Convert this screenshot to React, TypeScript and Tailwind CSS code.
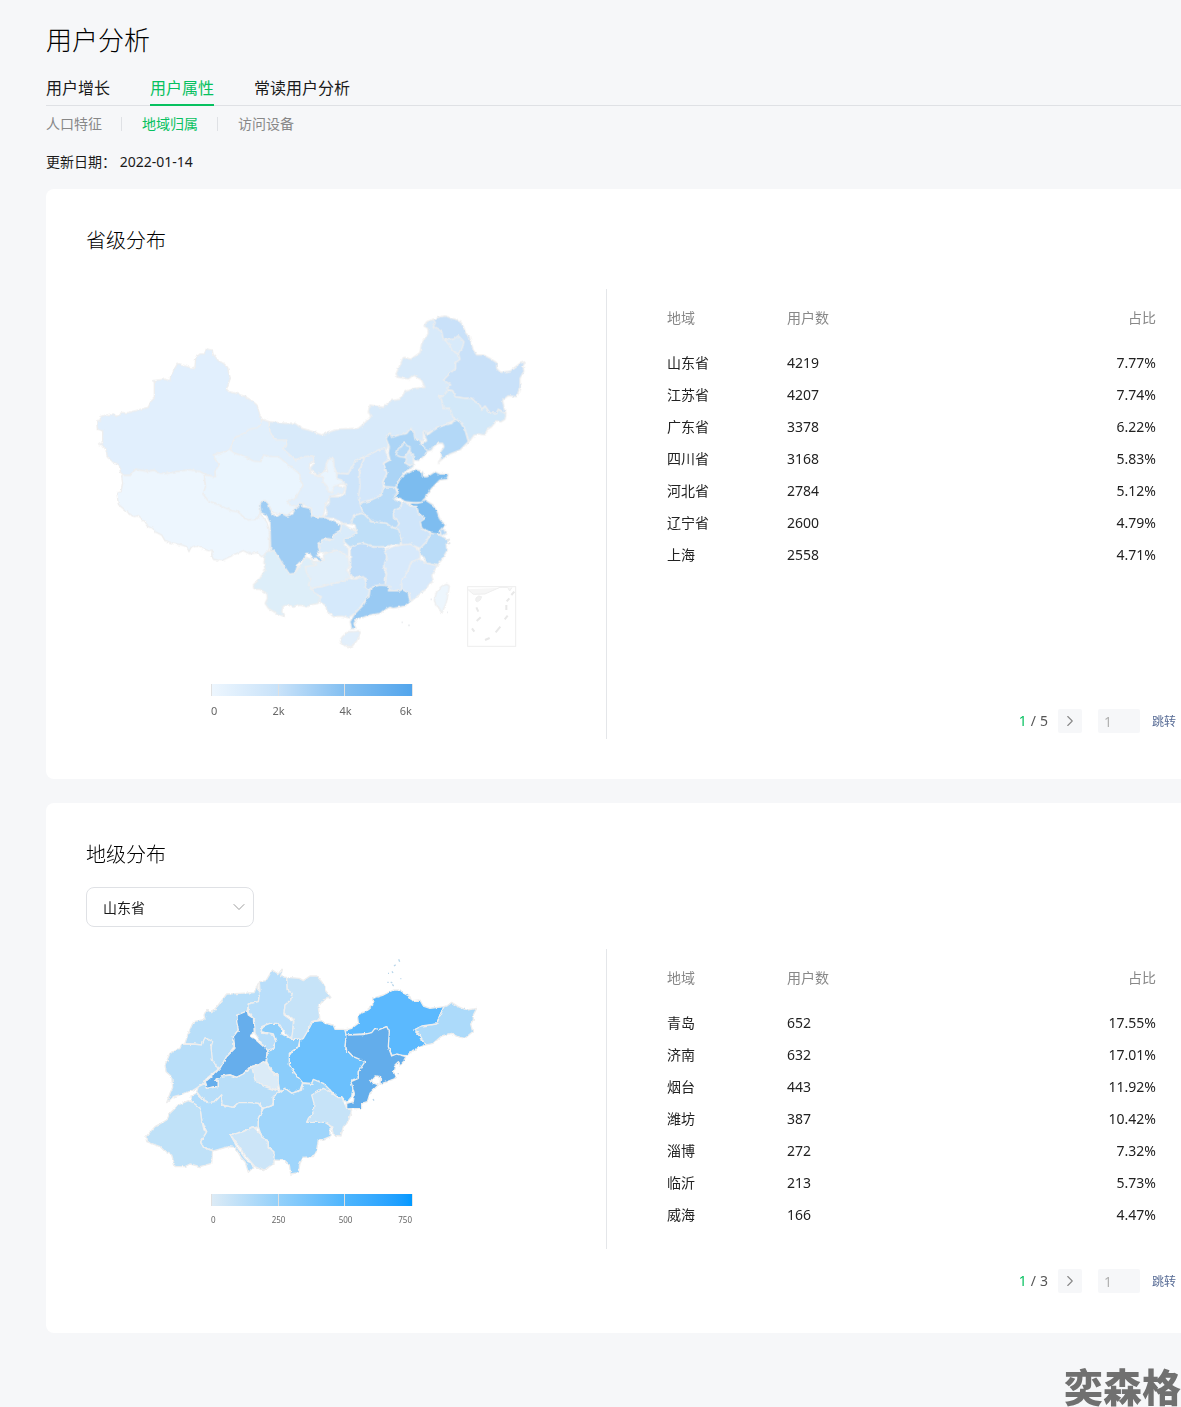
import { ChevronDown, ChevronRight } from "lucide-react";

type Region = { name: string; fill: string; points: string };
type RegionGroup = { x: number; y: number; regions: Region[] };
type Row = { area: string; users: number; share: string };

const provinceRows: Row[] = [
  { area: "山东省", users: 4219, share: "7.77%" },
  { area: "江苏省", users: 4207, share: "7.74%" },
  { area: "广东省", users: 3378, share: "6.22%" },
  { area: "四川省", users: 3168, share: "5.83%" },
  { area: "河北省", users: 2784, share: "5.12%" },
  { area: "辽宁省", users: 2600, share: "4.79%" },
  { area: "上海", users: 2558, share: "4.71%" },
];

const cityRows: Row[] = [
  { area: "青岛", users: 652, share: "17.55%" },
  { area: "济南", users: 632, share: "17.01%" },
  { area: "烟台", users: 443, share: "11.92%" },
  { area: "潍坊", users: 387, share: "10.42%" },
  { area: "淄博", users: 272, share: "7.32%" },
  { area: "临沂", users: 213, share: "5.73%" },
  { area: "威海", users: 166, share: "4.47%" },
];

// Later regions are painted over earlier ones, so shared borders only need to be exact once
const chinaGroups: RegionGroup[] = [
  {
    x: 612,
    y: 0,
    regions: [
      { name: "内蒙古", fill: "#d8eafa", points: "-63,365 -15,370 15,370 35,385 60,392 95,405 120,395 150,387 205,385 225,368 243,350 235,335 240,315 280,322 300,303 330,298 345,275 375,265 405,262 395,240 370,225 355,237 325,232 318,222 340,172 362,178 390,158 395,130 415,100 413,85 402,78 410,65 430,58 530,100 530,160 510,185 497,220 500,280 495,360 410,400 400,395 400,425 380,420 365,400 300,415 290,450 270,450 225,470 200,480 180,522 140,520 130,500 130,478 115,480 105,510 85,530 60,505 72,490 68,468 20,478 5,480 -22,465 -45,425 -63,400" },
      { name: "黑龙江", fill: "#c9e1f9", points: "430,58 445,52 465,48 490,56 510,62 520,80 528,100 538,110 550,150 560,165 580,165 600,175 620,188 620,205 632,217 660,213 690,190 706,185 698,200 702,213 690,235 690,262 680,290 655,287 638,300 642,325 648,340 625,328 620,338 600,340 585,318 575,328 568,312 555,305 545,295 525,295 495,290 488,272 470,268 482,254 460,240 480,220 497,205 497,188 510,178 505,160 515,150 522,125 505,107 490,118 460,118 455,95 440,85 430,80 436,68" },
      { name: "吉林", fill: "#d2e8f9", points: "447,285 458,290 470,272 488,272 495,290 525,295 545,295 555,305 568,312 575,328 585,318 600,340 620,338 625,328 648,342 645,358 632,366 620,362 605,380 590,390 585,405 565,402 550,408 538,425 525,390 510,365 495,358 488,350 480,325 460,325 455,300" },
      { name: "辽宁", fill: "#b3d8f7", points: "400,395 407,392 412,405 432,390 455,378 485,370 495,358 510,365 525,390 535,425 510,450 480,462 460,475 445,487 455,470 452,455 462,440 458,430 445,430 430,440 425,450 410,455 395,432 410,422" },
      { name: "河北", fill: "#abd4f6", points: "288,415 300,398 305,412 330,404 350,400 362,385 372,395 375,418 390,420 395,435 412,452 405,465 388,482 370,480 370,500 345,515 325,545 318,565 285,562 278,545 290,520 280,490 300,480 295,460 298,440" },
      { name: "北京", fill: "#b5d9f7", points: "318,465 325,445 334,440 343,428 352,438 360,440 360,458 350,465 345,472 330,470" },
      { name: "天津", fill: "#d5e9fa", points: "345,470 358,450 362,462 370,462 370,490 360,498 345,488 350,478" },
    ],
  },
  {
    x: -3,
    y: 90,
    regions: [
      { name: "甘肃", fill: "#e1effc", points: "531,268 552,275 555,305 570,330 605,330 605,345 593,355 620,380 632,390 655,380 683,378 687,390 670,405 680,430 700,440 765,440 760,470 783,470 775,490 735,500 720,530 715,562 680,560 680,535 645,520 625,540 600,540 600,450 430,420 434,361 450,322 493,298 526,285" },
      { name: "新疆", fill: "#e1effd", points: "364,57 382,60 384,72 400,92 415,100 428,112 430,122 436,145 424,178 432,185 452,190 476,197 500,212 516,225 523,250 531,268 526,285 515,294 493,298 470,315 450,322 440,345 430,366 385,375 392,390 402,405 390,425 392,440 360,433 345,425 315,419 270,426 240,431 220,428 208,421 185,424 152,418 136,436 116,436 106,426 103,405 85,397 66,380 65,362 52,345 40,342 53,335 53,303 37,297 35,273 47,270 45,260 70,254 86,252 94,260 110,248 130,248 160,240 190,232 197,215 208,205 208,155 203,152 240,148 255,152 257,137 278,100 300,108 318,114 330,112 332,82 345,72 358,72" },
      { name: "西藏", fill: "#edf6fe", points: "116,436 136,436 152,418 185,424 208,421 220,428 240,431 270,426 315,419 345,425 360,433 358,450 362,470 354,492 370,512 410,528 460,546 480,565 510,568 525,550 545,575 553,600 553,655 545,672 530,680 515,668 495,672 475,662 445,675 425,685 410,692 385,688 380,675 382,660 370,662 335,648 318,652 312,665 305,650 290,645 265,640 240,632 230,615 210,605 208,598 190,590 180,575 160,557 145,560 120,540 100,523 96,490 108,485 113,460 110,440" },
      { name: "青海", fill: "#eaf5fe", points: "385,375 412,367 437,360 450,370 475,378 505,393 528,395 535,375 560,380 580,380 605,400 630,420 645,432 645,450 655,465 640,492 628,508 605,512 615,524 640,530 625,540 608,555 590,555 565,548 550,525 540,512 528,518 525,548 520,560 510,568 490,570 480,565 460,546 440,542 410,528 370,512 354,492 362,470 358,435 392,440 390,425 402,405 392,390" },
    ],
  },
  {
    x: 462,
    y: 510,
    regions: [
      { name: "陕西", fill: "#cde4fa", points: "290,10 325,12 330,0 350,-30 375,-40 358,0 364,50 355,80 360,100 370,130 340,135 345,165 310,160 280,145 250,142 262,128 255,110 268,98 268,80 300,80 315,70 318,48 305,35 290,25" },
      { name: "山西", fill: "#d3e7fb", points: "375,-40 395,-50 420,-62 435,-65 445,-30 430,-20 440,10 428,35 430,50 425,75 390,90 360,98 355,80 360,50 358,10 365,-15" },
      { name: "宁夏", fill: "#eaf5fe", points: "235,15 250,5 262,5 258,-18 268,-36 280,-35 282,-10 290,10 290,25 305,30 317,44 300,42 280,50 278,68 265,65 262,50 248,35 250,20" },
      { name: "云南", fill: "#ddeef9", points: "75,250 92,240 100,238 115,262 130,285 148,312 165,310 180,285 200,262 230,275 210,320 220,350 225,365 245,385 235,400 210,405 200,410 180,405 160,412 145,405 130,408 125,425 133,440 110,430 85,415 75,400 82,385 80,370 60,358 42,358 40,345 60,325 75,300 72,280" },
      { name: "四川", fill: "#9fcdf4", points: "60,105 65,94 75,92 85,100 95,130 110,140 125,130 140,138 158,132 165,115 175,112 178,100 188,100 188,110 212,115 215,140 250,142 268,148 305,165 300,185 280,195 280,208 260,206 245,210 235,225 240,245 230,255 252,270 235,274 228,264 215,265 210,250 198,250 195,265 175,280 165,310 148,312 140,300 130,285 115,262 100,240 92,245 90,160 78,135 62,128" },
      { name: "山东", fill: "#7cbcef", points: "525,-3 548,5 550,20 562,20 585,5 600,12 625,12 622,28 600,30 575,55 555,85 550,97 520,98 495,95 480,85 460,80 475,65 468,50 478,30 490,15 510,5" },
      { name: "河南", fill: "#b9dbf8", points: "430,50 465,52 472,68 460,85 485,100 480,115 462,120 460,140 478,155 475,175 455,172 440,160 395,155 370,130 360,100 390,92 425,75" },
      { name: "江苏", fill: "#7ebdf0", points: "507,98 530,100 545,97 552,87 580,105 592,125 600,148 617,165 605,175 608,180 600,192 580,193 562,182 545,178 540,155 555,145 535,130 530,110 515,108" },
      { name: "上海", fill: "#b5d8f7", points: "600,180 610,176 620,192 603,197" },
      { name: "安徽", fill: "#cfe5fa", points: "485,100 495,95 510,108 530,110 535,130 555,145 540,155 545,175 570,190 560,215 540,235 510,222 485,225 480,195 465,180 478,160 460,140 462,120 480,115" },
      { name: "浙江", fill: "#badcf8", points: "570,190 590,192 605,198 628,210 618,222 622,240 605,270 590,287 560,280 550,262 535,245 540,235 560,215" },
      { name: "福建", fill: "#d7e9fb", points: "535,265 560,280 592,287 575,315 580,335 570,340 555,360 530,380 512,395 508,370 480,360 485,330 505,300 512,278" },
      { name: "江西", fill: "#d7e9fb", points: "435,240 460,230 485,225 510,222 525,230 540,245 540,265 512,278 505,300 485,330 485,362 445,362 435,345 440,310 430,285 440,262" },
      { name: "湖北", fill: "#bfdff8", points: "340,140 350,134 370,130 395,155 440,160 455,172 475,178 485,205 480,225 460,222 440,232 425,232 400,230 380,222 360,220 330,232 312,215 312,208 330,200 350,190 345,165 334,160" },
      { name: "重庆", fill: "#d9ebfa", points: "305,158 325,172 345,180 350,190 330,203 312,208 312,225 325,235 325,262 310,250 290,240 270,245 240,250 235,225 245,210 280,208 280,195 300,185" },
      { name: "贵州", fill: "#e1effa", points: "195,290 230,285 215,275 235,274 252,270 250,255 270,245 290,240 310,250 325,262 328,290 320,300 335,320 310,335 280,340 245,350 215,355 205,345 212,325 200,310" },
      { name: "湖南", fill: "#c0ddf9", points: "330,232 360,220 380,222 400,232 430,230 440,262 430,290 438,310 435,345 415,345 400,350 385,360 375,350 378,325 355,320 340,325 328,305 332,280" },
      { name: "广西", fill: "#d5e9fb", points: "212,355 245,350 280,340 310,335 325,325 345,328 370,320 378,335 375,350 388,360 385,380 370,400 345,430 325,443 305,438 280,440 262,425 255,405 235,395 245,380 225,370" },
      { name: "广东", fill: "#99caf3", points: "390,358 400,350 420,345 450,348 445,362 480,362 485,358 505,368 510,395 495,408 460,415 450,412 430,422 420,430 390,435 370,442 350,448 342,460 348,475 335,477 330,455 345,430 370,405 378,390 388,375" },
      { name: "海南", fill: "#e2effb", points: "301,508 310,497 325,485 348,484 360,482 360,492 350,512 335,530 315,528 303,518" },
      { name: "台湾", fill: "#edf6fd", points: "620,343 628,348 624,372 618,400 605,430 598,415 588,408 583,390 590,365 605,348" },
    ],
  },
];

const shandongGroups: RegionGroup[] = [
  {
    x: 0,
    y: 0,
    regions: [
      { name: "德州", fill: "#b8def9", points: "385,100 383,118 390,125 385,155 355,162 352,183 320,195 325,240 310,260 312,290 290,320 270,355 255,350 245,330 243,285 225,265 215,285 165,280 175,250 190,215 225,208 222,195 230,178 245,188 265,165 290,132 330,130 372,128" },
      { name: "聊城", fill: "#b8def9", points: "155,283 190,282 215,285 225,263 248,275 243,290 247,330 265,358 230,385 215,405 190,420 150,435 130,440 110,458 120,430 128,412 125,380 108,365 105,345 120,310 150,295" },
      { name: "滨州", fill: "#b9defa", points: "388,95 408,92 427,60 445,72 458,55 452,80 470,82 472,120 487,130 482,150 465,165 462,195 490,215 487,262 480,265 465,250 450,225 420,220 395,230 395,250 430,252 438,275 425,300 412,305 375,250 373,210 355,185 355,162 385,155 390,125" },
      { name: "济南", fill: "#66aeec", points: "322,195 352,183 355,195 370,205 373,245 360,258 378,270 395,285 412,300 408,335 385,345 360,350 340,372 320,382 300,375 275,378 258,388 265,395 265,410 250,410 232,415 226,395 250,375 270,355 290,320 315,295 310,260 325,240 320,215" },
      { name: "东营", fill: "#c6e3f8", points: "470,82 508,85 520,92 540,78 560,78 575,95 585,110 585,120 603,142 580,150 565,170 570,208 545,215 530,250 518,270 485,265 492,215 488,205 462,190 465,165 482,150 487,130 472,120" },
      { name: "潍坊", fill: "#6bc0fd", points: "548,215 575,212 585,220 610,225 615,238 645,238 650,255 645,295 670,320 705,332 700,350 685,365 685,385 665,390 670,410 665,440 650,458 635,440 620,440 600,420 580,415 575,400 555,400 550,390 545,400 515,398 495,370 478,345 475,320 490,300 508,290 508,272 520,265 535,240" },
      { name: "淄博", fill: "#8bcdfb", points: "393,245 400,228 420,220 440,220 455,235 455,252 485,268 510,268 505,290 478,310 478,345 495,370 518,398 510,420 485,430 465,415 450,425 440,375 425,362 410,335 412,305 425,300 438,275 430,252 412,248" },
      { name: "莱芜", fill: "#dbebf7", points: "365,350 385,345 400,335 415,345 420,360 445,380 443,420 420,415 400,408 375,390" },
      { name: "泰安", fill: "#b8def9", points: "226,400 232,415 265,410 265,395 258,388 275,378 300,375 320,382 340,372 365,350 375,390 400,408 450,425 430,440 430,465 400,475 385,460 360,458 325,458 310,472 275,465 275,435 255,455 235,458 215,445 200,425 205,410" },
      { name: "济宁", fill: "#b1dcfb", points: "180,440 200,430 215,445 235,458 255,455 275,435 275,465 310,472 325,458 360,458 385,460 398,478 385,505 385,530 302,555 320,590 345,625 372,650 355,667 345,635 335,625 315,592 295,590 250,603 220,592 212,575 230,545 215,510 210,475 185,455" },
      { name: "菏泽", fill: "#bfe1f8", points: "175,452 190,458 210,475 215,510 222,540 230,545 212,575 220,592 248,603 245,640 210,650 180,642 165,650 135,650 125,615 110,608 90,590 50,575 48,560 75,530 110,510 120,490 145,465" },
      { name: "枣庄", fill: "#cce5f8", points: "302,555 340,545 370,530 385,545 395,560 415,575 415,590 432,605 432,640 400,662 375,650 345,615 320,580" },
      { name: "临沂", fill: "#9fd5fb", points: "445,430 465,415 485,430 515,420 518,400 545,402 550,388 580,400 600,420 600,560 580,568 565,570 560,600 550,620 520,622 510,640 505,668 482,672 478,645 465,632 432,630 432,605 415,590 415,575 395,560 385,530 385,505 400,475 430,465 430,440" },
      { name: "日照", fill: "#c6e3f8", points: "545,435 580,415 600,425 620,440 635,440 650,475 665,480 655,515 640,530 633,558 610,555 605,530 585,517 530,517 535,505 550,485 552,460" },
      { name: "烟台", fill: "#5bb9fe", points: "645,240 665,235 685,220 682,195 705,185 728,165 728,145 760,135 790,120 810,120 825,132 840,140 845,152 870,150 880,168 900,175 942,170 930,195 920,222 875,230 852,240 870,260 885,285 850,300 830,317 785,315 775,290 775,250 770,230 720,250 648,255" },
      { name: "青岛", fill: "#63adeb", points: "648,255 700,254 725,248 735,235 745,240 770,230 778,245 775,290 785,318 800,312 828,320 820,335 812,345 805,335 795,345 790,365 797,385 750,403 752,380 735,378 720,395 745,405 720,430 712,455 695,460 695,475 650,477 650,460 670,455 673,430 663,395 685,385 685,365 705,335 670,320 645,295" },
      { name: "威海", fill: "#acdafa", points: "942,170 955,165 965,157 985,170 1010,180 1040,175 1030,195 1030,210 1022,222 1028,245 1005,265 990,262 965,250 935,258 910,280 885,285 870,255 852,240 875,228 920,222 930,195" },
    ],
  },
];

function RegionShapes({ groups }: { groups: RegionGroup[] }) {
  return (
    <>
      {groups.map((group) => (
        <g key={`${group.x}-${group.y}`} transform={`translate(${group.x} ${group.y})`}>
          {group.regions.map((r) => (
            <polygon key={r.name} points={r.points} fill={r.fill} stroke="#eee" strokeWidth="4" strokeLinejoin="round">
              <title>{r.name}</title>
            </polygon>
          ))}
        </g>
      ))}
    </>
  );
}

// Roughens straight polygon edges into something closer to a coastline
function RoughEdges({ id }: { id: string }) {
  return (
    <filter id={id} x="-2%" y="-2%" width="104%" height="104%" colorInterpolationFilters="sRGB">
      <feTurbulence type="fractalNoise" baseFrequency="0.08" numOctaves="2" seed="4" />
      <feDisplacementMap in="SourceGraphic" scale="9" xChannelSelector="R" yChannelSelector="G" />
    </filter>
  );
}

function ChinaMap() {
  return (
    <svg viewBox="0 0 1320 1080" className="w-[440px] h-[360px]" role="img" aria-label="省级分布">
      <defs>
        <RoughEdges id="rough-china" />
      </defs>
      <g filter="url(#rough-china)">
        <RegionShapes groups={chinaGroups} />
        <path d="M1075 118 L1090 135 L1098 152 L1119 164" fill="none" stroke="#eee" strokeWidth="4" />
      </g>
      {/* 南海诸岛 */}
      <g transform="translate(462 510)" stroke="#eee" fill="none" strokeWidth="3">
        <rect x="683" y="350" width="144" height="179" />
        <path d="M683 358 L700 373 L735 372 L780 352 L803 352 L809 363 L816 352" fill="#f6f6f6" />
        <path d="M708 384 l8 -6 l9 2 l-4 10 l-10 6 l-4 -5 z" fill="#f1f1f1" />
        <path d="M823 365 l-9 10 M808 385 l-8 9 M799 405 v15 M803 437 l-9 11 M781 470 l-14 17 M749 504 l-14 6 M703 485 l-7 -10 M722 442 l-12 11 M709 412 l6 13" stroke="#e8e8e8" strokeWidth="6" />
        <path d="M485 457 h3 M505 466 h4 M572 388 h3 M622 427 h2 M622 213 l7 -6 M625 222 l6 -4" stroke="#e5e8eb" strokeWidth="5" />
      </g>
    </svg>
  );
}

function ShandongMap() {
  return (
    <svg viewBox="0 -3 1080 720" className="ml-11 w-[360px] h-[240px]" role="img" aria-label="地级分布">
      <defs>
        <RoughEdges id="rough-shandong" />
      </defs>
      <g filter="url(#rough-shandong)">
        <RegionShapes groups={shandongGroups} />
      </g>
      <path
        d="M806 28 l3 7 M797 44 l-5 4 M786 64 l3 5 M774 70 h3 M772 97 h4 M782 96 l5 3 M787 103 l4 5 M811 86 h3 M729 447 l3 5 M803 371 h3"
        stroke="#b9d6ea"
        strokeWidth="4"
        fill="none"
      />
    </svg>
  );
}

function Legend({ colors, labels, labelClass }: { colors: string[]; labels: string[]; labelClass: string }) {
  return (
    <div className="ml-[125px] w-[202px]">
      <div className="grid h-3 grid-cols-[67px_66px_68px] border-r border-[#e6e6e6]">
        {colors.map((c) => (
          <div key={c} className={`border-l border-[#e0e0e0] bg-linear-to-r ${c}`} />
        ))}
      </div>
      <div className={`mt-2 grid grid-cols-[34px_67px_67px_33px] text-center text-[#666] ${labelClass}`}>
        <span className="text-left">{labels[0]}</span>
        <span>{labels[1]}</span>
        <span>{labels[2]}</span>
        <span className="text-right">{labels[3]}</span>
      </div>
    </div>
  );
}

function AreaTable({ rows }: { rows: Row[] }) {
  return (
    <table className="mt-4 w-full table-fixed text-sm text-[#222]">
      <thead>
        <tr className="h-[42px] align-top leading-[26px] text-[#888]">
          <th className="w-30 text-left font-normal">地域</th>
          <th className="text-left font-normal">用户数</th>
          <th className="text-right font-normal">占比</th>
        </tr>
      </thead>
      <tbody>
        {rows.map((row) => (
          <tr key={row.area} className="h-8">
            <td>{row.area}</td>
            <td>{row.users}</td>
            <td className="text-right">{row.share}</td>
          </tr>
        ))}
      </tbody>
    </table>
  );
}

function Pager({ pages }: { pages: number }) {
  return (
    <div className="flex h-6 items-center justify-end text-sm">
      <span className="flex gap-1 text-[#555]">
        <span className="text-[#07c160]">1</span>
        <span>/</span>
        <span>{pages}</span>
      </span>
      <button aria-label="下一页" className="ml-[10px] flex size-6 items-center justify-center rounded-xs bg-[#f6f7f9] text-[#888]">
        <ChevronRight size={18} strokeWidth={1.5} />
      </button>
      <input
        aria-label="页码"
        defaultValue="1"
        className="ml-4 h-6 w-[42px] rounded-xs bg-[#f6f7f9] px-[6px] text-[#b2b2b2] outline-none"
      />
      <button className="ml-3 pt-0.5 text-xs text-[#576b95]">跳转</button>
    </div>
  );
}

export default function App() {
  return (
    <div className="min-h-screen bg-[#f6f7f9] pl-[46px] pt-5 font-['Noto_Sans','Noto_Sans_CJK_SC',sans-serif] text-[#1a1a1a]">
      <h1 className="text-[26px] leading-10 font-light text-black">用户分析</h1>

      <nav className="mt-3 flex gap-10 border-b border-[#dfe1e5] text-base">
        <a href="#growth" className="h-[33px] leading-8">用户增长</a>
        <a href="#attribute" className="-mb-px h-[34px] border-b-2 border-[#07c160] leading-8 text-[#07c160]">用户属性</a>
        <a href="#frequent" className="h-[33px] leading-8">常读用户分析</a>
      </nav>

      <nav className="mt-2 flex items-center text-sm text-[#888]">
        <a href="#people">人口特征</a>
        <span className="mr-5 ml-[19px] h-[14px] w-px bg-[#dfe1e5]" />
        <a href="#region" className="text-[#07c160]">地域归属</a>
        <span className="mr-5 ml-[19px] h-[14px] w-px bg-[#dfe1e5]" />
        <a href="#device">访问设备</a>
      </nav>

      <p className="mt-[18px] text-sm">更新日期： 2022-01-14</p>

      <section className="mt-[17px] rounded-l-lg bg-white pt-9 pb-10 pl-10">
        <h2 className="text-xl leading-8 font-light text-black">省级分布</h2>
        <div className="mt-8 flex">
          <div className="h-[450px] w-[521px] shrink-0 border-r border-[#e4e6e9] pt-[11px]">
            <ChinaMap />
            <div className="mt-6">
              <Legend
                colors={["from-[#edf6fe] to-[#c8e2f9]", "from-[#c8e2f9] to-[#83bff1]", "from-[#83bff1] to-[#52a5ec]"]}
                labels={["0", "2k", "4k", "6k"]}
                labelClass="text-[11px] leading-[14px]"
              />
            </div>
          </div>
          <div className="flex flex-1 flex-col justify-between pb-[6px] pl-15 pr-[5px]">
            <div className="pr-5">
              <AreaTable rows={provinceRows} />
            </div>
            <Pager pages={5} />
          </div>
        </div>
      </section>

      <section className="mt-6 rounded-l-lg bg-white pt-9 pb-10 pl-10">
        <h2 className="text-xl leading-8 font-light text-black">地级分布</h2>
        <div className="relative mt-4 w-[168px]">
          <select aria-label="省份" className="h-10 w-full appearance-none rounded-lg border border-[#dfe1e5] bg-white px-4 pt-0.5 text-sm outline-none">
            <option>山东省</option>
          </select>
          <ChevronDown size={20} strokeWidth={1} className="pointer-events-none absolute right-[5px] top-[10px] text-[#888]" />
        </div>
        <div className="mt-[22px] flex items-start">
          <div className="h-[300px] w-[521px] shrink-0 border-r border-[#e4e6e9]">
            <ShandongMap />
            <div className="mt-[5px]">
              <Legend
                colors={["from-[#dcebf6] to-[#93d0fa]", "from-[#93d0fa] to-[#4db5fd]", "from-[#4db5fd] to-[#0099ff]"]}
                labels={["0", "250", "500", "750"]}
                labelClass="text-[8px] leading-3"
              />
            </div>
          </div>
          <div className="flex-1 pl-15 pr-[5px]">
            <div className="pr-5">
              <AreaTable rows={cityRows} />
            </div>
            <div className="mt-[38px]">
              <Pager pages={3} />
            </div>
          </div>
        </div>
      </section>

      <footer className="mt-[34px] text-right text-[39px] leading-10 font-black text-[#707070]">奕森格</footer>
    </div>
  );
}
